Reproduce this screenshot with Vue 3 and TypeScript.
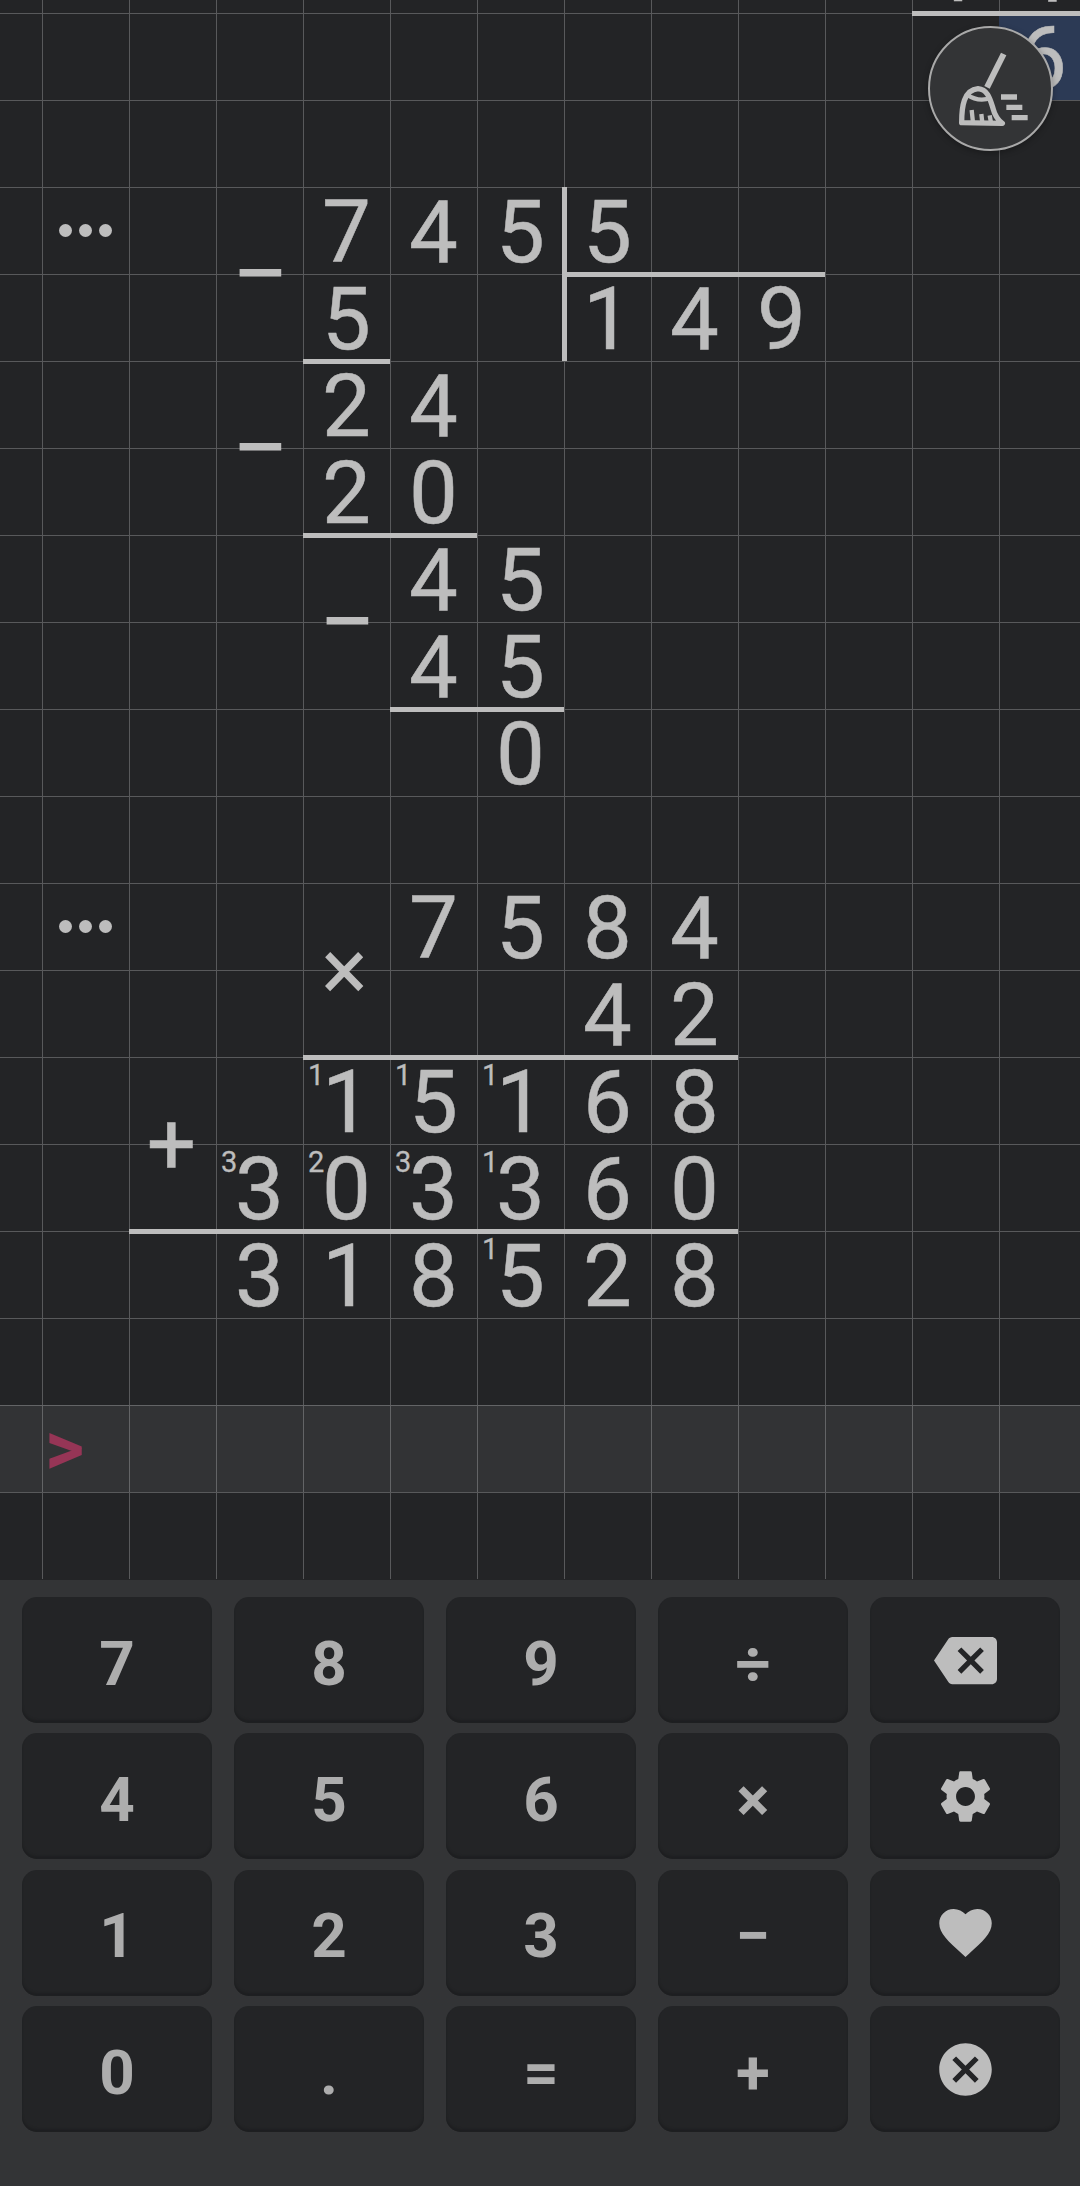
<script setup lang="ts">
import { computed } from 'vue';

// one line of digits on the squared sheet; sups = carry marks by digit position
interface Line {
    row: number,
    col: number,
    text: string,
    sups?: Record<number, string>,
}

const lines: Line[] = [
    { row: 1, col: 12, text: '14' },
    { row: 2, col: 13, text: '6' },
    { row: 4, col: 5, text: '7455' },
    { row: 5, col: 5, text: '5' },
    { row: 5, col: 8, text: '149' },
    { row: 6, col: 5, text: '24' },
    { row: 7, col: 5, text: '20' },
    { row: 8, col: 6, text: '45' },
    { row: 9, col: 6, text: '45' },
    { row: 10, col: 7, text: '0' },
    { row: 12, col: 6, text: '7584' },
    { row: 13, col: 8, text: '42' },
    { row: 14, col: 5, text: '15168', sups: { 0: '1', 1: '1', 2: '1' } },
    { row: 15, col: 4, text: '303360', sups: { 0: '3', 1: '2', 2: '3', 3: '1' } },
    { row: 16, col: 4, text: '318528', sups: { 3: '1' } },
];

const cells = computed(() =>
    lines.flatMap((line) =>
        [...line.text].map((digit, i) => ({
            key: `${line.row}-${line.col + i}`,
            digit,
            sup: line.sups?.[i],
            row: line.row,
            col: line.col + i,
        })),
    ),
);

const hRules = [
    { row: 2, from: 12, to: 14 },
    { row: 5, from: 8, to: 11 },
    { row: 6, from: 5, to: 6 },
    { row: 8, from: 5, to: 7 },
    { row: 10, from: 6, to: 8 },
    { row: 14, from: 5, to: 10 },
    { row: 16, from: 3, to: 10 },
];

const signs = [
    { key: 'm1', kind: 'minus', sign: '−', row: 4, col: 4 },
    { key: 'm2', kind: 'minus', sign: '−', row: 6, col: 4 },
    { key: 'm3', kind: 'minus', sign: '−', row: 8, col: 5 },
    { key: 'x', kind: 'times', sign: '×', row: 12, col: 5 },
    { key: 'p', kind: 'plus', sign: '+', row: 14, col: 3 },
];

const dotRows = [4, 12];

const keys = [
    { label: '7' }, { label: '8' }, { label: '9' }, { label: '÷' },
    { icon: 'M22 3H7c-.69 0-1.23.35-1.59.88L0 12l5.41 8.11c.36.53.9.89 1.59.89h15c1.1 0 2-.9 2-2V5c0-1.1-.9-2-2-2zm-3 12.59L17.59 17 14 13.41 10.41 17 9 15.59 12.59 12 9 8.41 10.41 7 14 10.59 17.59 7 19 8.41 15.41 12 19 15.59z' },
    { label: '4' }, { label: '5' }, { label: '6' }, { label: '×' },
    { icon: 'M19.14 12.94c.04-.3.06-.61.06-.94 0-.32-.02-.64-.07-.94l2.03-1.58c.18-.14.23-.41.12-.61l-1.92-3.32c-.12-.22-.37-.29-.59-.22l-2.39.96c-.5-.38-1.03-.7-1.62-.94l-.36-2.54c-.04-.24-.24-.41-.48-.41h-3.84c-.24 0-.43.17-.47.41l-.36 2.54c-.59.24-1.13.57-1.62.94l-2.39-.96c-.22-.08-.47 0-.59.22L2.74 8.87c-.12.21-.08.47.12.61l2.03 1.58c-.05.3-.09.63-.09.94s.02.64.07.94l-2.03 1.58c-.18.14-.23.41-.12.61l1.92 3.32c.12.22.37.29.59.22l2.39-.96c.5.38 1.03.7 1.62.94l.36 2.54c.05.24.24.41.48.41h3.84c.24 0 .44-.17.47-.41l.36-2.54c.59-.24 1.13-.56 1.62-.94l2.39.96c.22.08.47 0 .59-.22l1.92-3.32c.12-.22.07-.47-.12-.61l-2.01-1.58zM12 15.6c-1.98 0-3.6-1.62-3.6-3.6s1.62-3.6 3.6-3.6 3.6 1.62 3.6 3.6-1.62 3.6-3.6 3.6z' },
    { label: '1' }, { label: '2' }, { label: '3' }, { label: '−' },
    { icon: 'M12 21.35l-1.45-1.32C5.4 15.36 2 12.28 2 8.5 2 5.42 4.42 3 7.5 3c1.74 0 3.41.81 4.5 2.09C13.09 3.81 14.76 3 16.5 3 19.58 3 22 5.42 22 8.5c0 3.78-3.4 6.86-8.55 11.54L12 21.35z' },
    { label: '0' }, { label: '.' }, { label: '=' }, { label: '+' },
    { icon: 'M12 2C6.47 2 2 6.47 2 12s4.47 10 10 10 10-4.47 10-10S17.53 2 12 2zm5 13.59L15.59 17 12 13.41 8.41 17 7 15.59 10.59 12 7 8.41 8.41 7 12 10.59 15.59 7 17 8.41 13.41 12 17 15.59z' },
];
</script>

<template>
    <div class="screen">
        <div class="sheet">
            <div class="grid">
                <div class="highlight"></div>
                <div class="input-row">
                    <span class="prompt">&gt;</span>
                </div>

                <div v-for="r in dotRows" :key="r" class="dots" :style="{ gridRow: r }">
                    <i></i><i></i><i></i>
                </div>

                <div v-for="c in cells" :key="c.key" class="digit"
                    :style="{ gridRow: c.row, gridColumn: c.col }">
                    <sup v-if="c.sup" class="carry">{{ c.sup }}</sup>{{ c.digit }}
                </div>

                <div v-for="s in signs" :key="s.key" class="sign" :class="s.kind"
                    :style="{ gridRow: `${s.row} / span 2`, gridColumn: s.col }">{{ s.sign }}</div>

                <div v-for="h in hRules" :key="h.row" class="rule"
                    :style="{ gridRow: h.row, gridColumn: `${h.from} / ${h.to}` }"></div>
                <div class="rule-v"></div>
            </div>

            <button class="clear" type="button">
                <svg viewBox="385 78 375 375" width="125" height="125" fill="none" stroke="#bdbdbd">
                    <path d="M612 162L562 262" stroke-width="18" />
                    <path d="M486 368C486 320 492 270 535 266C565 268 572 300 580 325C585 345 595 360 608 370Z"
                        stroke-width="16" stroke-linejoin="round" />
                    <path d="M503 284C525 300 550 302 574 294" stroke-width="13" />
                    <path d="M516 330L520 368M545 342L548 368M570 346L574 368" stroke-width="13" />
                    <path d="M604 291H652M620 322H668M636 353H684" stroke-width="16" />
                </svg>
            </button>
        </div>

        <div class="keyboard">
            <button v-for="(k, i) in keys" :key="i" class="key" type="button">
                <svg v-if="k.icon" viewBox="0 0 24 24" width="63" height="63" fill="#bdbdbd">
                    <path :d="k.icon" />
                </svg>
                <span v-else class="key-label">{{ k.label }}</span>
            </button>
        </div>
    </div>
</template>

<style scoped>
.screen {
    width: 1080px;
    height: 2186px;
    overflow: hidden;
    background: #333436;
    font-family: Roboto, "Liberation Sans", sans-serif;
}

.sheet {
    position: relative;
    height: 1580px;
    overflow: hidden;
    background: #232426;
}

.grid {
    display: grid;
    grid-template-columns: 42px repeat(12, 87px);
    grid-template-rows: repeat(19, 87px);
    width: 1086px;
    margin-top: -74px;
    background-image:
        linear-gradient(to right, #58595b 1px, transparent 1px),
        linear-gradient(to bottom, #58595b 1px, transparent 1px);
    background-size: 87px 87px;
    background-position: 42px 0;
}

.highlight {
    grid-row: 2;
    grid-column: 13;
    background: #2c3a55;
}

.input-row {
    grid-row: 18;
    grid-column: 1 / -1;
    display: flex;
    align-items: center;
    background: rgba(255, 255, 255, 0.07);
}

.prompt {
    width: 129px;
    text-align: center;
    font-size: 76px;
    font-weight: 700;
    line-height: 87px;
    color: #963556;
}

.dots {
    grid-column: 2;
    display: flex;
    align-items: center;
    justify-content: center;
    gap: 7px;
}

.dots i {
    width: 13px;
    height: 13px;
    border-radius: 50%;
    background: #bdbdbd;
}

.digit {
    position: relative;
    height: 87px;
    padding-top: 2px;
    box-sizing: border-box;
    text-align: center;
    font-size: 87px;
    line-height: 87px;
    color: #bdbdbd;
    -webkit-text-stroke: 0.5px #bdbdbd;
}

.carry {
    position: absolute;
    left: 5px;
    top: 4px;
    font-size: 29px;
    line-height: 29px;
    -webkit-text-stroke: 0.3px #bdbdbd;
}

.sign {
    display: flex;
    align-items: center;
    justify-content: center;
    font-size: 87px;
    line-height: 87px;
    color: #bdbdbd;
}

.minus {
    padding-left: 2px;
    font-size: 102px;
}

.times {
    padding-right: 4px;
}

.plus {
    padding-right: 2px;
    -webkit-text-stroke: 0.5px #bdbdbd;
}

.rule {
    align-self: start;
    height: 5px;
    margin-top: -2px;
    background: #bdbdbd;
}

.rule-v {
    grid-row: 4 / 6;
    grid-column: 8;
    justify-self: start;
    width: 5px;
    margin-left: -2px;
    background: #bdbdbd;
}

.clear {
    position: absolute;
    left: 928px;
    top: 26px;
    width: 125px;
    height: 125px;
    padding: 0;
    display: flex;
    align-items: center;
    justify-content: center;
    border: 2px solid #a9a9a9;
    border-radius: 50%;
    background: #333436;
    box-shadow: 0 2px 6px rgba(0, 0, 0, 0.3);
}

.clear svg {
    flex-shrink: 0;
}

.keyboard {
    display: grid;
    grid-template-columns: repeat(5, 190px);
    grid-template-rows: repeat(4, 126px);
    column-gap: 22px;
    row-gap: 10.4px;
    padding: 17px 0 0 22px;
}

.key {
    display: flex;
    align-items: center;
    justify-content: center;
    padding: 0;
    border: none;
    border-radius: 15px;
    background: #232426;
    box-shadow: inset 0 -3px 2px #1e1f21;
    font-family: inherit;
    font-size: 62px;
    font-weight: 700;
    color: #adadad;
}

.key-label {
    margin-top: 6px;
}
</style>
